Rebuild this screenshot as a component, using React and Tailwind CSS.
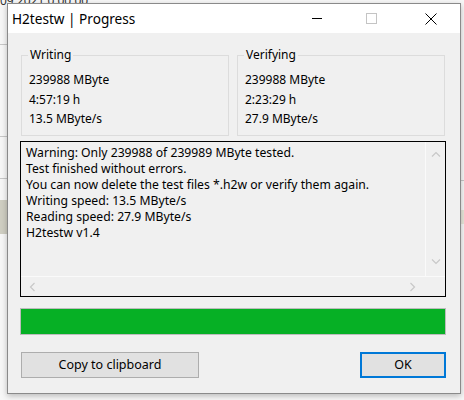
export default function App() {
  const font = { fontFamily: '"Noto Sans", "Open Sans", sans-serif' };
  return (
    <div className="relative w-[464px] h-[400px] bg-[#f7f7f7] overflow-hidden" style={font}>
      {/* background window fragments */}
      <div className="absolute left-0 top-[-8px] text-[12px] text-[#333] whitespace-nowrap">09 2021 0:00:00</div>
      <div className="absolute left-0 top-[44px] w-[7px] h-[1px] bg-[#c8c8c8]" />
      <div className="absolute left-0 top-[136px] w-[7px] h-[1px] bg-[#c8c8c8]" />
      <div className="absolute left-0 top-[178px] w-[7px] h-[1px] bg-[#c8c8c8]" />
      <div className="absolute left-0 top-[200px] w-[7px] h-[34px] bg-[#cfcec2]" />
      <div className="absolute left-[460px] top-[180px] w-[4px] h-[1px] bg-[#c8c8c8]" />
      <div className="absolute left-[460px] top-[210px] w-[4px] h-[14px] bg-[#e8e6da]" />

      {/* dialog window */}
      <div className="absolute left-[7px] top-[3px] w-[454px] h-[391px] border border-[#8a8a8a] bg-[#f0f0f0] shadow-[0_2px_6px_rgba(0,0,0,0.25)] flex flex-col">
        {/* title bar */}
        <div className="h-[29px] bg-white flex items-center shrink-0">
          <div className="pl-[4px] text-[13.6px] text-black leading-none">H2testw | Progress</div>
          <div className="ml-auto flex items-center h-full pr-[6px]">
            <div className="w-[46px] h-full flex items-center justify-center">
              <div className="w-[10px] h-[1px] bg-black" />
            </div>
            <div className="w-[46px] h-full flex items-center justify-center ml-[8px]">
              <div className="w-[11px] h-[11px] border border-[#c4c4c4]" />
            </div>
            <div className="w-[46px] h-full flex items-center justify-center ml-[14px]">
              <svg width="12" height="12" viewBox="0 0 12 12">
                <path d="M0.5 0.5 L11.5 11.5 M11.5 0.5 L0.5 11.5" stroke="#000" strokeWidth="1" />
              </svg>
            </div>
          </div>
        </div>

        {/* body */}
        <div className="flex-1 px-[12px] flex flex-col">
          <div className="mt-[22px] flex gap-[8px] pl-[1px]">
            {[
              ["Writing", "239988 MByte", "4:57:19 h", "13.5 MByte/s"],
              ["Verifying", "239988 MByte", "2:23:29 h", "27.9 MByte/s"],
            ].map(([title, a, b, c]) => (
              <div key={title} className="relative w-[208px] h-[81px] border border-[#dcdcdc]">
                <div className="absolute left-[6px] top-[-10px] px-[2px] bg-[#f0f0f0] text-[12px] leading-[18px] text-black">{title}</div>
                <div className="pl-[7px] pt-[14px] text-[12px] leading-[19.5px] text-black">
                  <div>{a}</div>
                  <div>{b}</div>
                  <div>{c}</div>
                </div>
              </div>
            ))}
          </div>

          {/* memo */}
          <div className="mt-[5px] w-[426px] h-[156px] border border-black flex flex-col">
            <div className="flex flex-1 min-h-0">
              <div className="flex-1 pl-[5px] pt-[3px] text-[12.2px] leading-[16px] text-black whitespace-nowrap overflow-hidden">
                <div>Warning: Only 239988 of 239989 MByte tested.</div>
                <div>Test finished without errors.</div>
                <div>You can now delete the test files *.h2w or verify them again.</div>
                <div>Writing speed: 13.5 MByte/s</div>
                <div>Reading speed: 27.9 MByte/s</div>
                <div>H2testw v1.4</div>
              </div>
              <div className="w-[20px] border-l border-[#fafafa] flex flex-col items-center justify-between pt-[9px] pb-[11px]">
                <svg width="10" height="6" viewBox="0 0 10 6">
                  <path d="M1 5.5 L5 1.5 L9 5.5" fill="none" stroke="#c8c8c8" strokeWidth="1.2" />
                </svg>
                <svg width="10" height="6" viewBox="0 0 10 6">
                  <path d="M1 0.5 L5 4.5 L9 0.5" fill="none" stroke="#c8c8c8" strokeWidth="1.2" />
                </svg>
              </div>
            </div>
            <div className="h-[20px] border-t border-[#fafafa] flex items-center justify-between pl-[8px] pr-[29px]">
              <svg width="6" height="10" viewBox="0 0 6 10">
                <path d="M5.5 1 L1.5 5 L5.5 9" fill="none" stroke="#c8c8c8" strokeWidth="1.2" />
              </svg>
              <svg width="6" height="10" viewBox="0 0 6 10">
                <path d="M0.5 1 L4.5 5 L0.5 9" fill="none" stroke="#c8c8c8" strokeWidth="1.2" />
              </svg>
            </div>
          </div>

          {/* progress */}
          <div className="mt-[11px] w-[426px] h-[27px] border border-[#bcbcbc] bg-[#06b025]" />

          {/* buttons */}
          <div className="mt-[17px] flex justify-between w-[426px]">
            <div className="ml-[1px] w-[178px] h-[26px] border border-[#adadad] bg-[#e1e1e1] flex items-center justify-center text-[12.5px] text-black">Copy to clipboard</div>
            <div className="w-[86px] h-[26px] border-2 border-[#0078d7] bg-[#e1e1e1] flex items-center justify-center text-[12.5px] text-black">OK</div>
          </div>
        </div>
      </div>
    </div>
  );
}
